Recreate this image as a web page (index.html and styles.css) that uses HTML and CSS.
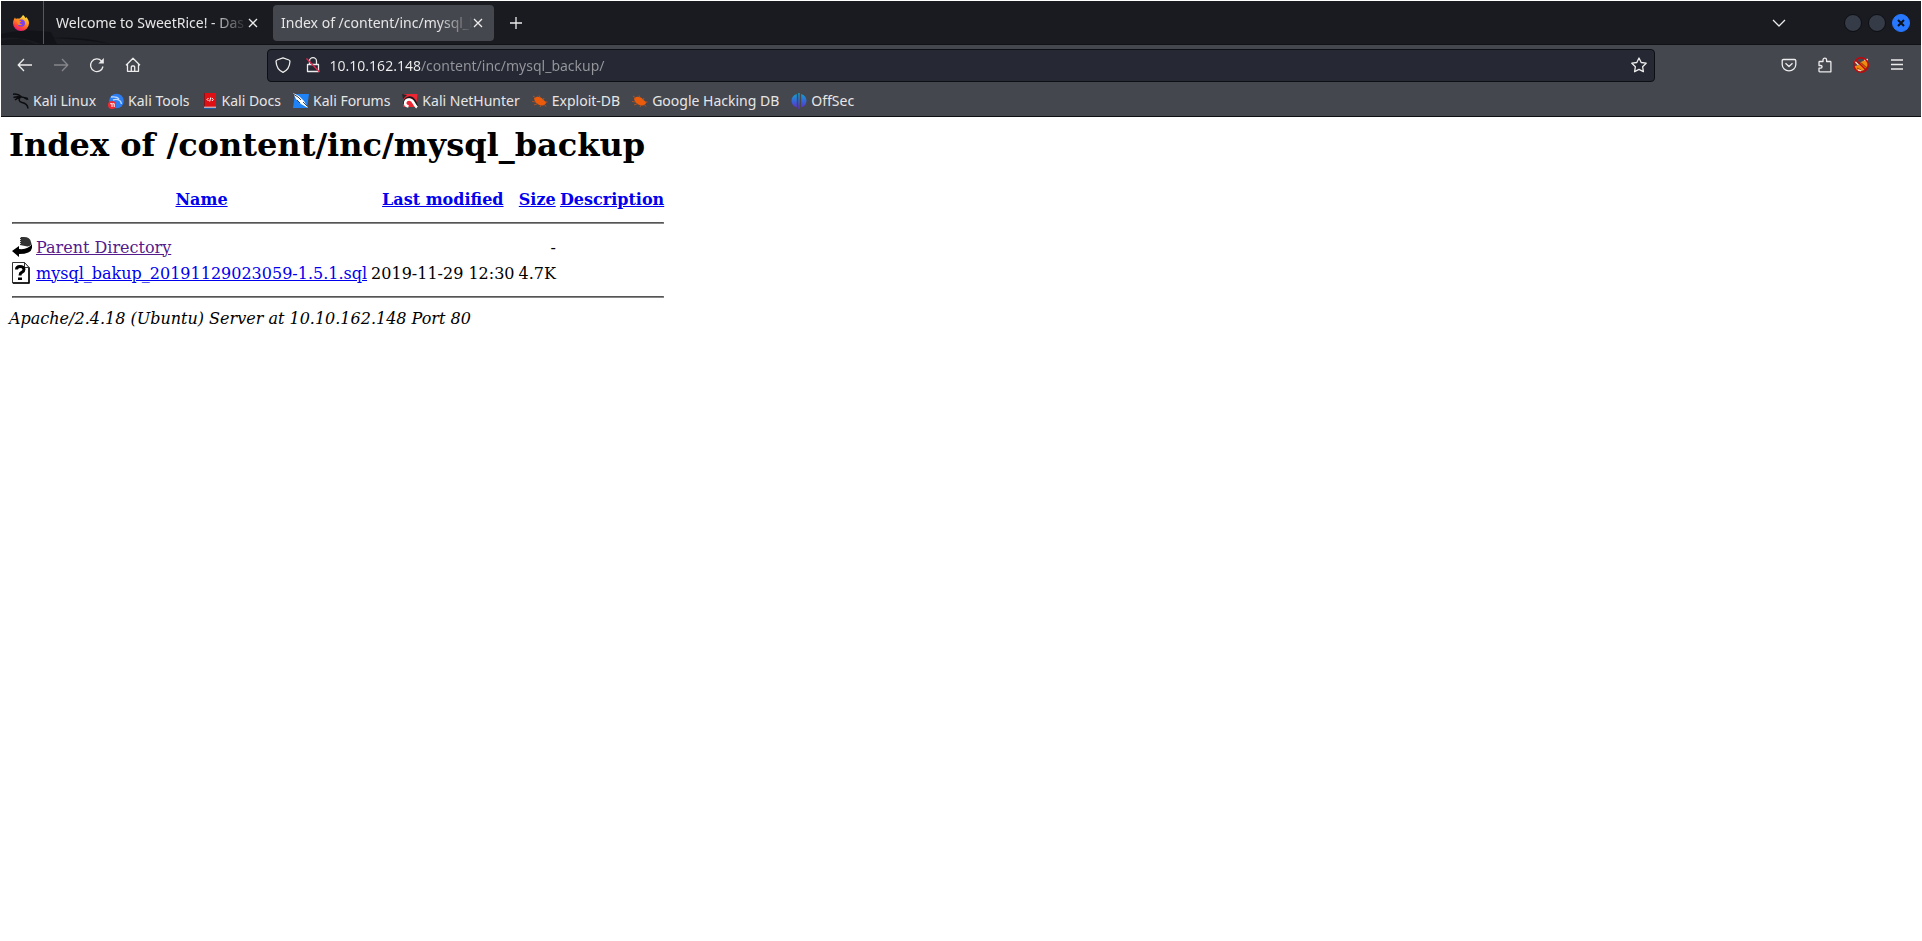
FILE: index.html
```html
<!DOCTYPE html>
<html lang="en">
<head>
<meta charset="utf-8">
<title>Index of /content/inc/mysql_backup</title>
<link rel="stylesheet" href="styles.css">
</head>
<body>
<div class="browser">
  <header class="chrome">
    <div class="tabbar">
      <svg class="dragon" width="130" height="43" viewBox="0 0 130 43" aria-hidden="true">
        <path d="M0 33 Q22 27 50 31 L56 43 H40 Q20 35 0 37Z" fill="#121318"/>
        <path d="M0 40 Q20 35 34 43 H0Z" fill="#15161b"/>
        <path d="M50 37 Q80 35 110 43 Q80 38 50 37Z" fill="#111217"/>
      </svg>
      <button class="pinned" aria-label="Firefox View">
        <svg width="16" height="16" viewBox="0 0 16 16">
          <defs>
            <linearGradient id="fx" x1=".8" y1="0" x2=".3" y2="1"><stop offset="0" stop-color="#fff04a"/><stop offset=".4" stop-color="#ff9a1f"/><stop offset=".75" stop-color="#ff4338"/><stop offset="1" stop-color="#e31587"/></linearGradient>
          </defs>
          <path d="M10 0c1.500 1 2 2 2.200 3 1-.2 1-.8 1-1C15 3.700 16 6 16 8.300A8 7.700 0 0 1 0 8.300C0 6 .8 4 2 2.400c.2.700.5 1.100 1 1.500.9-.5 2-.5 3-.2C7.300 3.500 8.800 1.800 10 0z" fill="url(#fx)"/>
          <circle cx="8.300" cy="8.200" r="3.600" fill="#7a3ff0"/>
          <path d="M2.500 4.500c2-.8 3.500 0 4.300 1.200l1.700.2c0 .8-1.800 1-2 1.700.2 1.500 1.600 1.600 3 1.100-1 1.900-4.600 1.900-5.200-.5-.2-1.200.2-1.700.6-2.200z" fill="#ff8a1c"/>
        </svg>
      </button>
      <div class="tab">
        <button class="tab-title">Welcome to SweetRice! - Das</button>
        <button class="tab-close" aria-label="Close tab"><svg width="10" height="10" viewBox="0 0 10 10"><path d="M1 1l8 8M9 1l-8 8"/></svg></button>
      </div>
      <div class="tab tab-active">
        <button class="tab-title">Index of /content/inc/mysql_b</button>
        <button class="tab-close" aria-label="Close tab"><svg width="10" height="10" viewBox="0 0 10 10"><path d="M1 1l8 8M9 1l-8 8"/></svg></button>
      </div>
      <button class="icon-btn new-tab" aria-label="New tab"><svg width="12" height="12" viewBox="0 0 12 12"><path d="M6 0v12M0 6h12"/></svg></button>
      <button class="icon-btn all-tabs" aria-label="List all tabs"><svg width="14" height="8" viewBox="0 0 14 8"><path d="M1 1l6 6 6-6"/></svg></button>
      <div class="window-controls">
        <button class="dot" aria-label="Minimize"></button>
        <button class="dot" aria-label="Maximize"></button>
        <button class="dot dot-close" aria-label="Close window"><svg width="8" height="8" viewBox="0 0 8 8"><path d="M1 1l6 6M7 1l-6 6"/></svg></button>
      </div>
    </div>

    <div class="navbar">
      <button class="icon-btn" aria-label="Back"><svg width="16" height="16" viewBox="0 0 16 16"><path d="M15 8H1.500M7 2L1.200 8 7 14"/></svg></button>
      <button class="icon-btn icon-dim" aria-label="Forward"><svg width="16" height="16" viewBox="0 0 16 16"><path d="M1 8h13.500M9 2l5.800 6L9 14"/></svg></button>
      <button class="icon-btn" aria-label="Reload"><svg width="16" height="16" viewBox="0 0 16 16"><path d="M14 9.500A6.300 6.300 0 1 1 12.500 4"/><path d="M14.800 1v5.500H9.300z" class="solid"/></svg></button>
      <button class="icon-btn" aria-label="Home"><svg width="16" height="16" viewBox="0 0 16 16"><path d="M1 8.200L8 1.300l7 6.900M2.500 7v7.300h11V7M6.300 14.300V10q0-1 1-1h1.400q1 0 1 1v4.300"/></svg></button>
      <div class="spring"></div>
      <div class="urlbar">
        <button class="icon-btn" aria-label="Tracking protection"><svg width="16" height="16" viewBox="0 0 16 16"><path d="M8 .8l6 2.200c.9.300 1 .9.900 1.700C14.700 9.500 13 13 8 15.300 3 13 1.300 9.500 1.100 4.700 1 3.900 1.100 3.300 2 3z"/></svg></button>
        <button class="icon-btn" aria-label="Connection not secure"><svg width="16" height="16" viewBox="0 0 16 16"><path d="M4.500 7V4.200a3.500 3.500 0 0 1 7 0V7M2.500 14.500v-7h11v7z"/><path d="M1.500 1.500l13 13.500" class="strike"/></svg></button>
        <input class="url" type="text" aria-label="Address" value="10.10.162.148/content/inc/mysql_backup/">
        <button class="icon-btn" aria-label="Bookmark this page"><svg width="16" height="16" viewBox="0 0 16 16"><path d="M8 1l2.200 4.500 5 .7-3.600 3.500.8 5L8 12.400l-4.400 2.300.8-5L.8 6.200l5-.7z"/></svg></button>
      </div>
      <div class="spring"></div>
      <button class="icon-btn" aria-label="Save to Pocket"><svg width="16" height="16" viewBox="0 0 16 16"><path d="M2.500 2.500h11q1.300 0 1.300 1.300V7.500a6.800 6.300 0 0 1-13.600 0V3.800q0-1.300 1.300-1.300zM4.500 6.200L8 9.500l3.500-3.300"/></svg></button>
      <button class="icon-btn" aria-label="Extensions"><svg width="16" height="16" viewBox="0 0 16 16"><path d="M2 8.500V5.200q0-.7.700-.7H6V3a1.700 1.700 0 0 1 3.600 0v1.500h3.600q.7 0 .7.700v9.600H2.700q-.7 0-.7-.7v-2.900h1.700a1.300 1.300 0 0 0 0-2.700z"/></svg></button>
      <button class="icon-btn" aria-label="FoxyProxy">
        <svg class="picture" width="16" height="16" viewBox="0 0 16 16">
          <path d="M2 9l4-1 2-3 4-2 3 1-.3 5L11 13l-5 2-3.500-2z" fill="#f08a12"/>
          <path d="M8 6l6 5M4 11l4 2" stroke="#a54a08"/>
          <path d="M1.500 4l4 4M11 3l4-.5M5 13l3 1" stroke="#f3d9c4" stroke-width="1.400"/>
          <circle cx="8" cy="8" r="7.200" fill="none" stroke="#c4060b" stroke-width="1.400"/>
          <path d="M3 3l10 10" stroke="#c4060b" stroke-width="1.400"/>
        </svg>
      </button>
      <button class="icon-btn" aria-label="Menu"><svg width="16" height="16" viewBox="0 0 16 16"><path d="M2 3h12M2 7.500h12M2 12h12"/></svg></button>
    </div>

    <nav class="bookmarks" aria-label="Bookmarks">
      <a href="#"><svg width="16" height="16" viewBox="0 0 16 16"><path d="M0 1.200c3-.6 6 .3 8.500 2.600M.5 4.500c2.500-1 5-1 7.500-.5M2 7c1.500-1.500 3.500-2.200 5.500-2.200M8 4c2.500-.5 4 .5 6.500 2.500M8 4C5 6 6 9 9 9.500s5.500 1.500 6 6" fill="none" stroke="#0b0c0f" stroke-width="1.500"/><path d="M10 4l4.500.5L15.500 7 12 6z" fill="#0b0c0f"/></svg>Kali Linux</a>
      <a href="#"><svg width="16" height="16" viewBox="0 0 16 16"><circle cx="8.500" cy="8" r="7.300" fill="#2d7df0"/><path d="M3 4c4-.5 7 .5 8 2M5 7c4-1.500 8 0 8.500 4" fill="none" stroke="#bcd9ff" stroke-width="1.400"/><circle cx="4" cy="12" r="4" fill="#ee2b35"/><path d="M2.200 10.700H4V14M4.400 10.700h1.800V14" fill="none" stroke="#fff"/></svg>Kali Tools</a>
      <a href="#"><svg width="16" height="16" viewBox="0 0 16 16"><path d="M2 0h12v16H2z" fill="#de1014"/><path d="M2 0h1v14H2z" fill="#8b1119"/><path d="M2 14.500h12V16H2z" fill="#1e5da3"/><path d="M2 13.700h12v1H2z" fill="#ddd"/><path d="M6.500 5L5 6.500 6.500 8M9.800 5l1.500 1.500L9.800 8M8.700 4.500l-1 4" fill="none" stroke="#fff"/></svg>Kali Docs</a>
      <a href="#"><svg width="16" height="16" viewBox="0 0 16 16"><path d="M2 1h14l-2 14H0z" fill="#1f83f5"/><path d="M0 0l6 3 5 5 4 7-7-4-5-5z" fill="#fff"/><path d="M0 1l5 3 3 3M10 9l4 4M4 7l3 3" fill="none" stroke="#263449" stroke-width=".9"/></svg>Kali Forums</a>
      <a href="#"><svg width="16" height="16" viewBox="0 0 16 16"><path d="M2 1h13.500l-1.500 13H1z" fill="#ed2633"/><path d="M0 1l5 1-4 4z" fill="#25262b"/><path d="M2 11C2 4 9 2.500 12 6.500S14 12 15.500 14" fill="none" stroke="#17181c" stroke-width="2"/><path d="M6.500 13.500C1 12 3 6 7.500 6.500S11 11 15 14.500" fill="none" stroke="#fff" stroke-width="2.600"/></svg>Kali NetHunter</a>
      <a href="#"><svg width="16" height="16" viewBox="0 0 16 16"><path d="M2 5.500C5 2.500 9 4 11 6.500l3.500 3-2 2.500C9 13.500 3 11 2 5.500z" fill="#ea5b0c"/><path d="M1 3l3 2M7 2.500l1 2.500M12 5l-1 2M13 9h2.500M0 8.500l4 .5M2 12l4-1.500M8 14l1-2M12 11l2 2.500" stroke="#b7531d" stroke-width=".9"/></svg>Exploit-DB</a>
      <a href="#"><svg width="16" height="16" viewBox="0 0 16 16"><path d="M2 5.500C5 2.500 9 4 11 6.500l3.500 3-2 2.500C9 13.500 3 11 2 5.500z" fill="#ea5b0c"/><path d="M1 3l3 2M7 2.500l1 2.500M12 5l-1 2M13 9h2.500M0 8.500l4 .5M2 12l4-1.500M8 14l1-2M12 11l2 2.500" stroke="#b7531d" stroke-width=".9"/></svg>Google Hacking DB</a>
      <a href="#"><svg width="16" height="16" viewBox="0 0 16 16"><defs><linearGradient id="os" x1="0" y1="0" x2="0" y2="1"><stop offset="0" stop-color="#12a5c8"/><stop offset=".5" stop-color="#3566d8"/><stop offset="1" stop-color="#6329c4"/></linearGradient></defs><path d="M5.800 1v13.500C2.500 13.500.5 11 .5 7.800S2.500 2 5.800 1zM10.200 1v13.500c3.300-1 5.300-3.500 5.300-6.700S13.500 2 10.200 1zM7.300 0h1.400v16H7.300z" fill="url(#os)"/></svg>OffSec</a>
    </nav>
  </header>

  <main class="page">
    <h1>Index of /content/inc/mysql_backup</h1>
    <table class="listing">
      <thead>
        <tr class="head">
          <th></th>
          <th><a href="#">Name</a></th>
          <th><a href="#">Last modified</a></th>
          <th><a href="#">Size</a></th>
          <th><a href="#">Description</a></th>
        </tr>
        <tr><td colspan="5"><hr></td></tr>
      </thead>
      <tbody>
        <tr>
          <td><svg class="file-icon" width="20" height="22" viewBox="0 0 20 22" role="img" aria-label="Directory"><path d="M8 1h4q6 0 7 5l.5 2q-1 2-4 2.500L8 9z" fill="#333"/><path d="M8.500 1v8" stroke="#ccc" stroke-dasharray="1 1"/><path d="M20 8v4q-1 6-13 6v3L0 15l7-5v3q9 1 13-5z" fill="#000"/></svg></td>
          <td><a href="#" class="seen">Parent Directory</a></td>
          <td></td>
          <td class="size">-</td>
          <td></td>
        </tr>
        <tr>
          <td><svg class="file-icon" width="20" height="22" viewBox="0 0 20 22" role="img" aria-label="Unknown file"><path d="M.5.500h12l4.500 5v15.500H.5z" fill="#fff" stroke="#333"/><path d="M17 5.500V21H1" fill="none" stroke="#000" stroke-width="1.500"/><path d="M12.500.5v5H17z" fill="#fff" stroke="#333"/><path d="M4.500 7.500Q4.500 4.500 8 4.500t4 2.700Q12 9 10 10.200q-2 1-2 3.300" fill="none" stroke="#000" stroke-width="3"/><path d="M6 15.500h4V18H6z"/></svg></td>
          <td><a href="#">mysql_bakup_20191129023059-1.5.1.sql</a></td>
          <td class="date">2019-11-29 12:30</td>
          <td class="size">4.7K</td>
          <td></td>
        </tr>
        <tr><td colspan="5"><hr></td></tr>
      </tbody>
    </table>
    <address>Apache/2.4.18 (Ubuntu) Server at 10.10.162.148 Port 80</address>
  </main>
</div>
</body>
</html>
```

FILE: styles.css
```css
* { box-sizing: border-box; }

body {
  margin: 0;
  background: #fff;
}

.browser {
  min-height: 100vh;
  border: 1px solid #fff;
  display: flex;
  flex-direction: column;
}

.chrome {
  font: 14px/20px "Noto Sans", sans-serif;
  color: #e6e6e6;
  background: #45474e;
  border-bottom: 1px solid #0e0f13;
}

.chrome button {
  font: inherit;
  color: inherit;
  background: none;
  border: 0;
  padding: 0;
}

.chrome svg {
  display: block;
  flex: none;
}

/* Tab strip */
.tabbar {
  position: relative;
  display: flex;
  align-items: center;
  height: 44px;
  background: #1a1b20;
  border-bottom: 1px solid #111216;
}

.dragon {
  position: absolute;
  left: 0;
  bottom: 0;
}

.pinned {
  position: relative;
  width: 43px;
  height: 43px;
  display: flex;
  align-items: center;
  justify-content: center;
}

.chrome .pinned {
  padding-right: 2px;
  border-right: 1px solid #55575d;
}

.tab {
  position: relative;
  display: flex;
  align-items: center;
  width: 221px;
  height: 36px;
  padding: 0 11px 0 8px;
  border-radius: 4px;
}

.tab:not(.tab-active) {
  margin: 0 4px;
}

.tab-active {
  background: #45474e;
}

.chrome .tab-title {
  flex: 1;
  min-width: 0;
  overflow: hidden;
  white-space: nowrap;
  text-align: left;
  mask-image: linear-gradient(to left, transparent 0, #000 36px);
}

.tab-close svg,
.icon-btn svg {
  fill: none;
  stroke: #ececec;
  stroke-width: 1.3;
  stroke-linejoin: round;
}

.icon-btn {
  flex: none;
  display: flex;
  align-items: center;
  justify-content: center;
  width: 36px;
  height: 32px;
}

.new-tab {
  margin-left: 4px;
}

.all-tabs {
  margin-left: auto;
}

.window-controls {
  display: flex;
  gap: 6px;
  margin: 0 11px 0 47px;
}

.chrome .dot {
  width: 18px;
  height: 18px;
  border: 1px solid #0d0e12;
  border-radius: 50%;
  background: #363b48;
}

.chrome .dot-close {
  display: flex;
  align-items: center;
  justify-content: center;
  background: #2777ff;
  border-color: #2777ff;
}

.dot-close path {
  stroke: #0d1118;
  stroke-width: 2;
}

/* Navigation toolbar */
.navbar {
  display: flex;
  align-items: center;
  height: 40px;
  padding: 0 6px;
}

.icon-btn .solid {
  fill: #ececec;
  stroke: none;
}

.icon-btn .strike {
  stroke: #e2274f;
}

.icon-btn.icon-dim svg {
  stroke: #85868b;
}

.icon-btn .picture {
  stroke: none;
}

.spring {
  flex: 1;
}

.urlbar {
  flex: 12;
  display: flex;
  align-items: center;
  height: 33px;
  background: #262833;
  border: 1px solid #0e0f14;
  border-radius: 4px;
}

.urlbar .icon-btn {
  width: 30px;
}

.url {
  flex: 1;
  min-width: 0;
  height: 28px;
  padding: 0 2px;
  border: 0;
  outline: 0;
  font: inherit;
  color: transparent;
  background: linear-gradient(to right, #f0f0f0 93px, #96979d 93px);
  background-clip: text;
}

/* Bookmarks toolbar */
.bookmarks {
  display: flex;
  align-items: center;
  gap: 12px;
  height: 31px;
  padding: 0 12px;
}

.bookmarks a {
  display: flex;
  align-items: center;
  gap: 4px;
  color: inherit;
  text-decoration: none;
  white-space: nowrap;
}

/* Directory listing */
.page {
  flex: 1;
  padding: 9px 8px 8px;
  font: 16px/19px "DejaVu Serif", serif;
  color: #000;
}

.page h1 {
  margin: 0 0 21px;
  font-size: 32px;
  line-height: 38px;
}

.page a {
  color: #0000ee;
}

.page .seen {
  color: #551a8b;
}

.listing {
  border-spacing: 2px;
  white-space: nowrap;
}

.listing th,
.listing td {
  padding: 1px;
}

.head th {
  height: 24px;
}

.listing .size,
.listing .date {
  text-align: right;
}

.listing hr {
  margin: 8px 0;
  border: 1px solid;
  border-color: #555 #888 #888 #555;
}

.file-icon {
  display: block;
}
```
